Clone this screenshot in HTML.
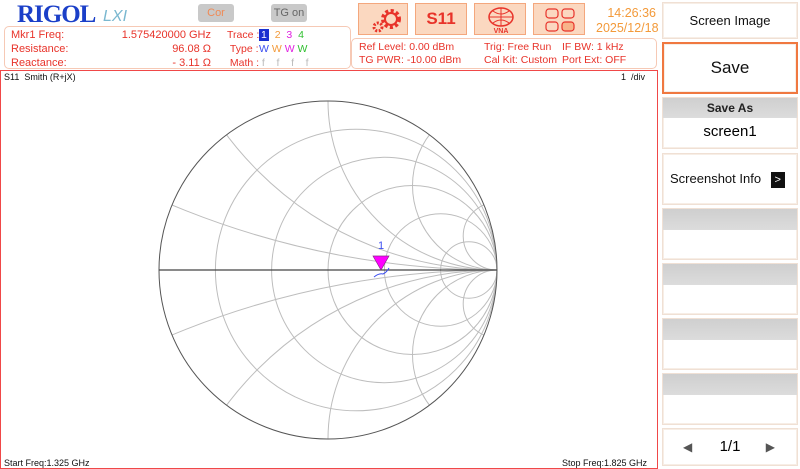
<!DOCTYPE html>
<html style="overflow:hidden;width:800px;height:469px"><head><meta charset="utf-8"><style>
*{margin:0;padding:0;box-sizing:border-box}
body{width:800px;height:469px;background:#fff;position:relative;overflow:hidden;font-family:"Liberation Sans",sans-serif}
.a{position:absolute;white-space:nowrap}
.r{color:#e8332a}
.btn{position:absolute;left:662px;width:136px;background:#fff;border:1px solid #f0e0d4;box-shadow:inset 0 0 0 1px #f7eee6;overflow:hidden}
.gr{background:linear-gradient(#cfcfcf,#dcdcdc)}
.ic{position:absolute;top:3px;height:32px;background:#fbd8c0;border:1px solid #f4a77d}
</style></head><body>
<div class="a" style="left:17px;top:1px;font:bold 25px 'Liberation Serif',serif;color:#1b3fc8;letter-spacing:-1px">RIGOL</div>
<div class="a" style="left:103px;top:8px;font:italic 16px 'Liberation Sans';color:#7ab8d0">LXI</div>
<div class="a" style="left:198px;top:4px;width:36px;height:18px;background:#c9c9c9;border-radius:3px;color:#f08a55;font-size:11px;text-align:center;line-height:18px">Cor</div>
<div class="a" style="left:271px;top:4px;width:36px;height:18px;background:#c9c9c9;border-radius:3px;color:#666;font-size:11px;text-align:center;line-height:18px">TG on</div>
<div class="ic" style="left:358px;width:50px"><svg width="50" height="32"><circle cx="32" cy="15" r="8" fill="none" stroke="#e8332a" stroke-width="4" stroke-dasharray="3 2.3"/><circle cx="32" cy="15" r="6" fill="none" stroke="#e8332a" stroke-width="2"/><circle cx="19" cy="23" r="4" fill="none" stroke="#e8332a" stroke-width="3" stroke-dasharray="2 1.5"/></svg></div>
<div class="ic" style="left:415px;width:52px;color:#e8332a;font:bold 17px 'Liberation Sans';text-align:center;line-height:30px">S11</div>
<div class="ic" style="left:474px;width:52px"><svg width="52" height="32"><ellipse cx="26" cy="13" rx="12" ry="9" fill="none" stroke="#e8332a" stroke-width="1.5"/><path d="M14 13h24M26 4v18M18 7q8 6 16 0M18 19q8-6 16 0" stroke="#e8332a" fill="none"/><text x="26" y="29" font-size="7" font-weight="bold" fill="#e8332a" text-anchor="middle" font-family="Liberation Sans">VNA</text></svg></div>
<div class="ic" style="left:533px;width:52px"><svg width="52" height="32"><g fill="none" stroke="#e8332a" stroke-width="1.2"><rect x="12" y="5" width="12" height="9" rx="3"/><rect x="28" y="5" width="12" height="9" rx="3"/><rect x="12" y="18" width="12" height="9" rx="3"/><rect x="28" y="18" width="12" height="9" rx="3" fill="#f8b48a"/></g></svg></div>
<div class="a" style="left:596px;top:6px;color:#f39a3a;font-size:12.5px;line-height:15px;text-align:right;width:60px">14:26:36<br>2025/12/18</div>
<div class="a" style="left:4px;top:26px;width:347px;height:43px;border:1px solid #f6c9b5;border-radius:5px"></div>
<div class="a" style="left:351px;top:38px;width:306px;height:31px;border:1px solid #f6c9b5;border-radius:5px"></div>
<div class="a r" style="left:11px;top:28px;font-size:11px;line-height:14px">Mkr1 Freq:<br>Resistance:<br>Reactance:</div>
<div class="a r" style="left:100px;top:28px;width:111px;font-size:11px;line-height:14px;text-align:right">1.575420000 GHz<br>96.08 Ω<br>- 3.11 Ω</div>
<div class="a" style="left:227px;top:28px;font-size:10.5px;line-height:14px;color:#e8332a">Trace :<br>&nbsp;Type :<br>&nbsp;Math :</div>
<div class="a" style="left:259px;top:28px;font-size:10.5px;line-height:14px"><span style="background:#1b2fd0;color:#fff;padding:0 2px">1</span>&nbsp; <span style="color:#f39a3a">2</span>&nbsp; <span style="color:#e020e0">3</span>&nbsp; <span style="color:#30c030">4</span><br><span style="color:#3b4ef0">W</span> <span style="color:#f39a3a">W</span> <span style="color:#e020e0">W</span> <span style="color:#30c030">W</span><br><span style="color:#bbb">&nbsp;f&nbsp;&nbsp;&nbsp; f&nbsp;&nbsp;&nbsp; f&nbsp;&nbsp;&nbsp; f</span></div>
<div class="a r" style="left:359px;top:41px;font-size:10.5px;line-height:13px">Ref Level: 0.00 dBm<br>TG PWR: -10.00 dBm</div>
<div class="a r" style="left:484px;top:41px;font-size:10.5px;line-height:13px">Trig: Free Run<br>Cal Kit: Custom</div>
<div class="a r" style="left:562px;top:41px;font-size:10.5px;line-height:13px">IF BW: 1 kHz<br>Port Ext: OFF</div>
<div class="a" style="left:0;top:70px;width:658px;height:399px;border:1px solid #f04848"></div>
<div class="a" style="left:4px;top:72px;font-size:9px;line-height:10px;color:#111">S11 &nbsp;Smith (R+jX)</div>
<div class="a" style="left:621px;top:72px;font-size:9px;line-height:10px;color:#111">1 &nbsp;/div</div>
<div class="a" style="left:4px;top:458px;font-size:9px;line-height:10px;color:#111">Start Freq:1.325 GHz</div>
<div class="a" style="left:562px;top:458px;font-size:9px;line-height:10px;color:#111">Stop Freq:1.825 GHz</div>
<svg class="a" style="left:0;top:0" width="660" height="469">
<defs><clipPath id="c"><circle cx="328" cy="270" r="169"/></clipPath></defs>
<g fill="none" stroke="#bdbdbd" stroke-width="1" clip-path="url(#c)">
<circle cx="356.2" cy="270" r="140.8"/><circle cx="384.3" cy="270" r="112.7"/><circle cx="412.5" cy="270" r="84.5"/><circle cx="440.7" cy="270" r="56.3"/><circle cx="468.8" cy="270" r="28.2"/>
<circle cx="497" cy="-575" r="845"/><circle cx="497" cy="1115" r="845"/>
<circle cx="497" cy="-68" r="338"/><circle cx="497" cy="608" r="338"/>
<circle cx="497" cy="101" r="169"/><circle cx="497" cy="439" r="169"/>
<circle cx="497" cy="185.5" r="84.5"/><circle cx="497" cy="354.5" r="84.5"/>
<circle cx="497" cy="236.2" r="33.8"/><circle cx="497" cy="303.8" r="33.8"/>
</g>
<circle cx="328" cy="270" r="169" fill="none" stroke="#555" stroke-width="1"/>
<line x1="159" y1="270" x2="497" y2="270" stroke="#444" stroke-width="1.3"/>
<path d="M374 277q5-4 9-3q4-2 6-6" stroke="#3b4ef0" fill="none" stroke-width="1"/>
<path d="M373 256h16l-8 14z" fill="#ff00ff" stroke="#8a2a8a" stroke-width=".7"/>
<text x="381" y="249" font-size="11" fill="#3b4ef0" text-anchor="middle" font-family="Liberation Sans">1</text>
</svg>
<div class="btn" style="top:2px;height:37px;font-size:13px;text-align:center;line-height:36px;font-weight:500;color:#111">Screen Image</div>
<div class="btn" style="top:42px;height:52px;border:2px solid #f07840;font-size:17px;text-align:center;line-height:48px;color:#111">Save</div>
<div class="btn" style="top:97px;height:52px"><div class="gr" style="height:20px;font-size:12px;font-weight:bold;text-align:center;line-height:20px;color:#222">Save As</div><div style="font-size:15px;text-align:center;line-height:28px">screen1</div></div>
<div class="btn" style="top:153px;height:52px;font-size:13px;line-height:50px;padding-left:7px;color:#111">Screenshot Info <span style="display:inline-block;width:14px;height:16px;background:#111;color:#fff;font-size:11px;line-height:16px;text-align:center;margin-left:6px;vertical-align:middle">&gt;</span></div>
<div class="btn" style="top:208px;height:52px"><div class="gr" style="height:21px"></div></div>
<div class="btn" style="top:263px;height:52px"><div class="gr" style="height:21px"></div></div>
<div class="btn" style="top:318px;height:52px"><div class="gr" style="height:21px"></div></div>
<div class="btn" style="top:373px;height:52px"><div class="gr" style="height:21px"></div></div>
<div class="btn" style="top:428px;height:38px;font-size:15px;line-height:36px;text-align:center"><span style="position:absolute;left:20px;color:#555;font-size:12px">◀</span>1/1<span style="position:absolute;right:22px;color:#555;font-size:12px">▶</span></div>
</body></html>
